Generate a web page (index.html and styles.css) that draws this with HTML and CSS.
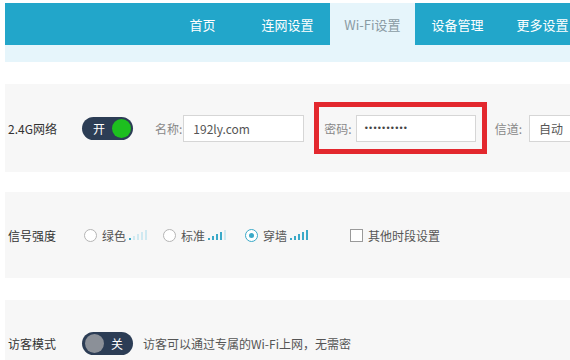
FILE: index.html
```html
<!DOCTYPE html>
<html lang="zh">
<head>
<meta charset="utf-8">
<link rel="stylesheet" href="styles.css">
</head>
<body>
<div class="page">
  <header class="nav">
    <a class="nav-item">首页</a>
    <a class="nav-item">连网设置</a>
    <a class="nav-item active">Wi-Fi设置</a>
    <a class="nav-item">设备管理</a>
    <a class="nav-item">更多设置</a>
  </header>
  <div class="subbar"></div>

  <section class="panel panel-1">
    <span class="label">2.4G网络</span>
    <span class="toggle on"><span class="toggle-text">开</span><span class="knob"></span></span>
    <span class="field-label name-label">名称:</span>
    <span class="input name-input">192ly.com</span>
    <span class="highlight">
      <span class="field-label">密码:</span>
      <span class="input pwd-input">••••••••••</span>
    </span>
    <span class="field-label chan-label">信道:</span>
    <span class="input chan-input">自动</span>
  </section>

  <section class="panel panel-2">
    <span class="label">信号强度</span>
    <span class="radio"></span><span class="opt">绿色</span>
    <svg class="bars" width="18" height="10" viewBox="0 0 18 10">
      <rect x="0" y="8" width="2" height="2" fill="#3aa9c8"/>
      <rect x="4" y="6" width="2" height="4" fill="#cfe9f1"/>
      <rect x="8" y="4" width="2" height="6" fill="#cfe9f1"/>
      <rect x="12" y="2" width="2" height="8" fill="#cfe9f1"/>
      <rect x="16" y="0" width="2" height="10" fill="#cfe9f1"/>
    </svg>
    <span class="radio r2"></span><span class="opt">标准</span>
    <svg class="bars" width="18" height="10" viewBox="0 0 18 10">
      <rect x="0" y="8" width="2" height="2" fill="#3aa9c8"/>
      <rect x="4" y="6" width="2" height="4" fill="#3aa9c8"/>
      <rect x="8" y="4" width="2" height="6" fill="#3aa9c8"/>
      <rect x="12" y="2" width="2" height="8" fill="#3aa9c8"/>
      <rect x="16" y="0" width="2" height="10" fill="#cfe9f1"/>
    </svg>
    <span class="radio r3 checked"></span><span class="opt">穿墙</span>
    <svg class="bars" width="18" height="10" viewBox="0 0 18 10">
      <rect x="0" y="8" width="2" height="2" fill="#3aa9c8"/>
      <rect x="4" y="6" width="2" height="4" fill="#3aa9c8"/>
      <rect x="8" y="4" width="2" height="6" fill="#3aa9c8"/>
      <rect x="12" y="2" width="2" height="8" fill="#3aa9c8"/>
      <rect x="16" y="0" width="2" height="10" fill="#3aa9c8"/>
    </svg>
    <span class="checkbox"></span><span class="opt">其他时段设置</span>
  </section>

  <section class="panel panel-3">
    <span class="label">访客模式</span>
    <span class="toggle off"><span class="knob"></span><span class="toggle-text">关</span></span>
    <span class="desc">访客可以通过专属的Wi-Fi上网，无需密</span>
  </section>
</div>
</body>
</html>
```

FILE: styles.css
```css
* { box-sizing: border-box; }
html, body { margin: 0; padding: 0; background: #fff; }
body {
  width: 570px;
  height: 360px;
  overflow: hidden;
  font-family: "Noto Sans CJK SC", "Noto Sans", sans-serif;
  font-size: 12px;
  color: #333;
}
.page {
  padding: 3px 0 0 5px;
}
.nav {
  display: flex;
  height: 42px;
  background: #22a6ca;
  padding-left: 155px;
}
.nav-item {
  width: 85px;
  display: flex;
  align-items: center;
  justify-content: center;
  color: #fff;
  font-size: 13px;
  white-space: nowrap;
  flex: none;
}
.nav-item.active {
  background: #e6f5fb;
  color: #8a9ba3;
}
.subbar {
  height: 17px;
  background: #e6f5fb;
  margin-bottom: 22px;
}
.panel {
  display: flex;
  align-items: center;
  background: #f7f7f7;
  padding-left: 3px;
  margin-bottom: 20px;
  white-space: nowrap;
}
.panel-1 { height: 88px; }
.panel-2 { height: 86px; margin-bottom: 22px; }
.panel-3 { height: 60px; padding-top: 26px; margin-bottom: 0; }
.label {
  width: 74px;
  flex: none;
  color: #333;
}
.toggle {
  display: flex;
  align-items: center;
  width: 51px;
  height: 23px;
  border-radius: 12px;
  background: #2c3d55;
  color: #fff;
  padding: 0 2px;
  flex: none;
}
.toggle .knob {
  width: 19px;
  height: 19px;
  border-radius: 50%;
  flex: none;
}
.toggle.on .toggle-text { margin-left: 9px; margin-right: auto; }
.toggle.on .knob { background: #1dbf1f; }
.toggle.off .knob { background: #8b9098; margin-left: 1px; }
.toggle.off .toggle-text { margin-left: 7px; }
.field-label {
  color: #888;
  flex: none;
}
.name-label { margin-left: 22px; margin-right: 1px; }
.input {
  height: 27px;
  border: 1px solid #d6d6d6;
  background: #fff;
  display: flex;
  align-items: center;
  padding-left: 9px;
  color: #555;
  flex: none;
}
.name-input { width: 121px; }
.highlight {
  display: flex;
  align-items: center;
  margin-left: 10px;
  border: 5px solid #e3282e;
  height: 52px;
  padding: 0 6px 0 5px;
  flex: none;
}
.highlight .field-label { margin-right: 4px; }
.pwd-input {
  width: 120px;
  font-family: "Liberation Sans", sans-serif;
  font-size: 9px;
  letter-spacing: 1.2px;
  color: #444;
  padding-left: 8px;
}
.chan-label { margin-left: 8px; margin-right: 7px; }
.chan-input { width: 60px; }
.radio {
  width: 13px;
  height: 13px;
  border-radius: 50%;
  border: 1px solid #b5b5b5;
  background: #fff;
  flex: none;
  margin-left: 2px;
  margin-right: 5px;
  display: flex;
  align-items: center;
  justify-content: center;
}
.radio.r2 { margin-left: 16px; }
.radio.r3 { margin-left: 19px; }
.radio.checked { border-color: #3aa9c8; }
.radio.checked::after {
  content: "";
  width: 5px;
  height: 5px;
  border-radius: 50%;
  background: #3aa9c8;
}
.opt { color: #555; flex: none; }
.bars { margin-left: 3px; flex: none; }
.checkbox {
  width: 13px;
  height: 13px;
  border: 1px solid #9a9a9a;
  background: #fff;
  margin-left: 42px;
  margin-right: 5px;
  flex: none;
}
.desc {
  margin-left: 10px;
  color: #555;
}
```
